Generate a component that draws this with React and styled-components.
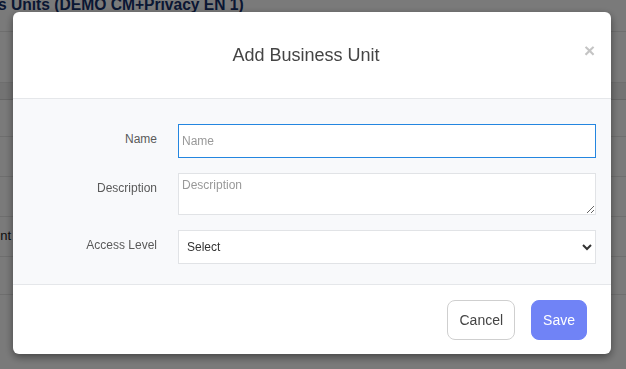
import styled, { createGlobalStyle } from 'styled-components';

const Global = createGlobalStyle`
  html, body { margin: 0; padding: 0; }
  body { font-family: "Liberation Sans", Arial, sans-serif; background: #fff; overflow: hidden; }
  * { box-sizing: border-box; }
`;

const Page = styled.div`width: 626px; height: 369px; overflow: hidden;`;
const PageTitle = styled.h1`
  margin: -5px 0 -1px -2px; font-size: 15.6px; font-weight: bold; color: #15306b;
  white-space: nowrap; line-height: 20px;
`;
const TableRow = styled.div`
  height: ${p => p.h}px; border-bottom: 1px solid ${p => (p.head ? '#d6d6d6' : '#e6e6e6')};
  background: ${p => (p.head ? '#f0f0f0' : '#fff')};
  font-size: 13px; color: #222; display: flex; align-items: center; padding-bottom: 2px;
`;
const Cell = styled.span`margin-left: -7px;`;

const Backdrop = styled.div`
  position: fixed; inset: 0; background: rgba(0, 0, 0, 0.52);
`;

const Modal = styled.div`
  position: fixed; left: 13px; top: 12px; width: 598px; height: 342px;
  background: #fff; border-radius: 6px; overflow: hidden;
  box-shadow: 0 3px 9px rgba(0, 0, 0, 0.45);
  display: flex; flex-direction: column;
`;

const Header = styled.div`
  height: 87px; border-bottom: 1px solid #e5e7ea;
  display: flex; align-items: center; justify-content: center; position: relative;
`;
const Title = styled.h2`
  margin: 0 12px 0 0; font-size: 18px; font-weight: normal; color: #444;
`;
const Close = styled.button`
  position: absolute; right: 16px; top: 29px; border: none; background: none;
  padding: 0; font-size: 19px; font-weight: bold; color: #c4c4c4; line-height: 1;
  font-family: "Liberation Sans", Arial, sans-serif; cursor: pointer;
`;

const Body = styled.div`
  background: #f8f9fb; padding: 25px 15px 5px 0; border-bottom: 1px solid #e5e7ea;
`;
const Row = styled.div`
  display: grid; grid-template-columns: 144px 1fr; column-gap: 21px; margin-bottom: 15px;
`;
const Label = styled.label`
  text-align: right; font-size: 12px; color: #5a5a5a; padding-top: ${p => p.pt}px;
`;
const Input = styled.input`
  height: 34px; width: 100%; border: 1px solid ${p => (p.focused ? '#2486e0' : '#e1e3e6')};
  background: #fff; padding: 0 3px; font-size: 12px; color: #333; outline: none;
  font-family: "Liberation Sans", Arial, sans-serif; display: block;
  &::placeholder { color: #999; }
`;
const TextArea = styled.textarea`
  height: 42px; width: 100%; border: 1px solid #e1e3e6; background: #fff;
  padding: 4px 3px; font-size: 12px; color: #333; outline: none; resize: vertical;
  font-family: "Liberation Sans", Arial, sans-serif; display: block;
  &::placeholder { color: #999; }
`;
const Select = styled.select`
  height: 34px; width: 100%; border: 1px solid #e1e3e6; background: #fff;
  padding: 0 4px; font-size: 12px; color: #333; outline: none; border-radius: 0;
  font-family: "Liberation Sans", Arial, sans-serif; display: block;
`;

const Footer = styled.div`
  flex: 1; display: flex; justify-content: flex-end; align-items: flex-start;
  gap: 16px; padding: 15px 24px 0 0;
`;
const Button = styled.button`
  height: 40px; padding: 0 11px; border-radius: 8px;
  font-size: 14px; font-family: "Liberation Sans", Arial, sans-serif; cursor: pointer;
  border: 1px solid ${p => (p.primary ? '#7083f6' : '#cfcfcf')};
  background: ${p => (p.primary ? '#7083f6' : '#fff')};
  color: ${p => (p.primary ? '#fff' : '#444')};
`;

export default function App() {
  return (
    <Page>
      <Global />
      <PageTitle>s Units (DEMO CM+Privacy EN 1)</PageTitle>
      <TableRow h={18} />
      <TableRow h={51} />
      <TableRow h={17} head />
      <TableRow h={37} />
      <TableRow h={40} />
      <TableRow h={40} />
      <TableRow h={40}><Cell>ent</Cell></TableRow>
      <TableRow h={38} />
      <Backdrop />
      <Modal>
        <Header>
          <Title>Add Business Unit</Title>
          <Close aria-label="Close">×</Close>
        </Header>
        <Body>
          <Row>
            <Label pt={8}>Name</Label>
            <Input placeholder="Name" focused />
          </Row>
          <Row>
            <Label pt={8}>Description</Label>
            <TextArea placeholder="Description" />
          </Row>
          <Row>
            <Label pt={8}>Access Level</Label>
            <Select defaultValue="">
              <option value="">Select</option>
            </Select>
          </Row>
        </Body>
        <Footer>
          <Button>Cancel</Button>
          <Button primary>Save</Button>
        </Footer>
      </Modal>
    </Page>
  );
}
